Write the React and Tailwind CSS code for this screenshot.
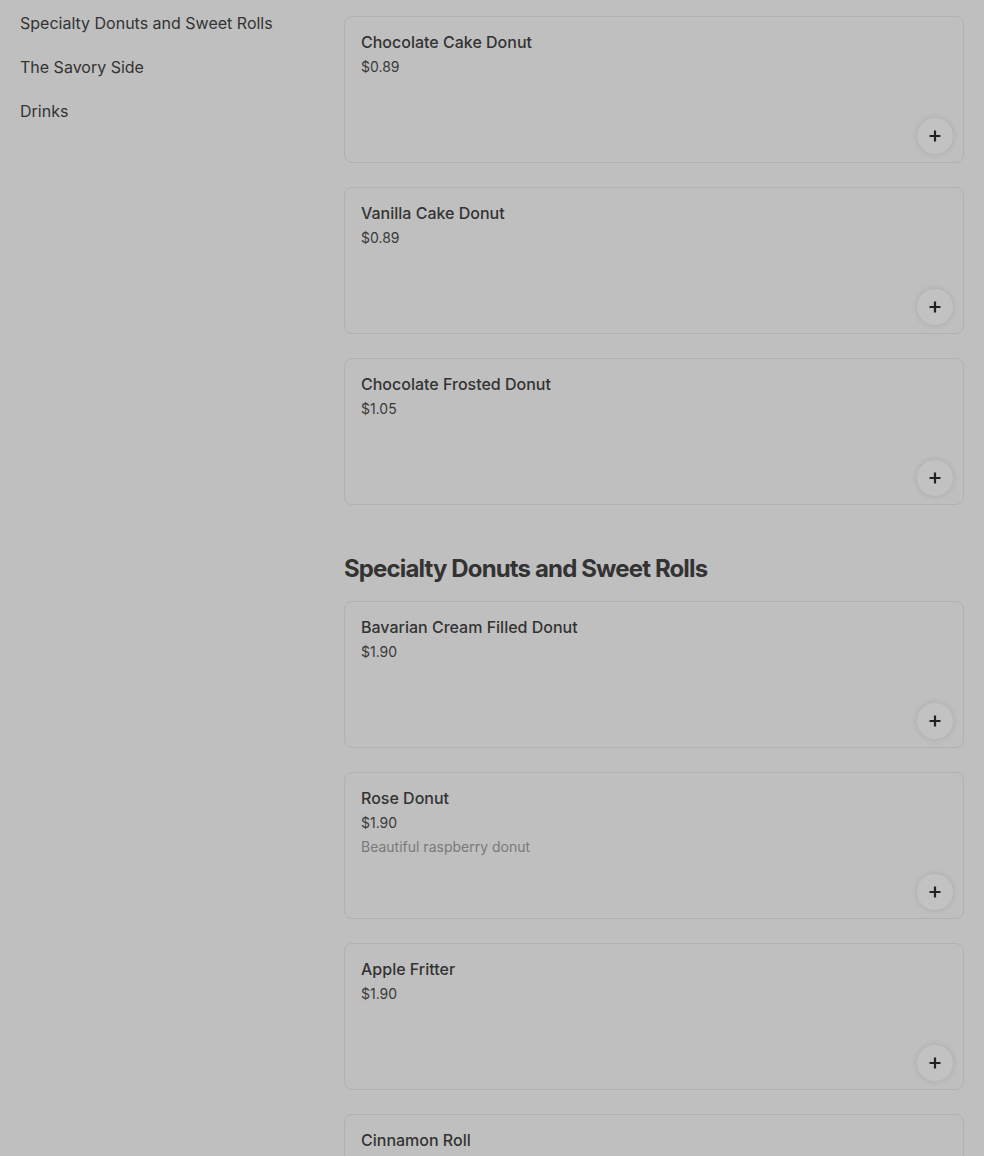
import React from "react";

const sections = [
  {
    title: null,
    items: [
      { name: "Chocolate Cake Donut", price: "$0.89" },
      { name: "Vanilla Cake Donut", price: "$0.89" },
      { name: "Chocolate Frosted Donut", price: "$1.05" },
    ],
  },
  {
    title: "Specialty Donuts and Sweet Rolls",
    items: [
      { name: "Bavarian Cream Filled Donut", price: "$1.90" },
      { name: "Rose Donut", price: "$1.90", desc: "Beautiful raspberry donut" },
      { name: "Apple Fritter", price: "$1.90" },
      { name: "Cinnamon Roll", price: "$1.90" },
    ],
  },
];

const PlusIcon = () => (
  <svg width="12" height="12" viewBox="0 0 12 12" fill="none">
    <path d="M6 0.5v11M0.5 6h11" stroke="#222" strokeWidth="2.2" />
  </svg>
);

const ItemCard = ({ item }) => (
  <div className="relative h-[147px] rounded-lg border border-[#b1b1b1] px-4 pt-[15px]">
    <div className="text-[16px] leading-5 font-medium text-[#333]">{item.name}</div>
    <div className="mt-[5px] text-[14px] leading-5 text-[#3a3a3a]">{item.price}</div>
    {item.desc && (
      <div className="mt-1 text-[14px] leading-5 text-[#7a7a7a]">{item.desc}</div>
    )}
    <button className="absolute right-[10px] bottom-2 flex h-9 w-9 items-center justify-center rounded-full bg-[#c2c2c2] shadow-[0_0_6px_rgba(0,0,0,0.12)]">
      <PlusIcon />
    </button>
  </div>
);

export default function App() {
  return (
    <div
      className="flex h-[1156px] overflow-hidden bg-[#bfbfbf]"
      style={{ fontFamily: "Inter, 'Noto Sans', sans-serif" }}
    >
      {/* Sidebar categories */}
      <nav className="w-[344px] shrink-0 pl-5 pt-[13px]">
        {["Specialty Donuts and Sweet Rolls", "The Savory Side", "Drinks"].map((c) => (
          <div key={c} className="h-11 text-[16px] leading-5 text-[#333]">
            {c}
          </div>
        ))}
      </nav>

      {/* Menu */}
      <main className="flex-1 pr-5 pt-4">
        {sections.map((s, i) => (
          <section key={i} className={i > 0 ? "mt-12" : ""}>
            {s.title && (
              <h2 className="mt-px mb-4 text-[24px] leading-8 font-bold tracking-[-0.036em] text-[#333]">
                {s.title}
              </h2>
            )}
            <div className="flex flex-col gap-6">
              {s.items.map((item) => (
                <ItemCard key={item.name} item={item} />
              ))}
            </div>
          </section>
        ))}
      </main>
    </div>
  );
}
